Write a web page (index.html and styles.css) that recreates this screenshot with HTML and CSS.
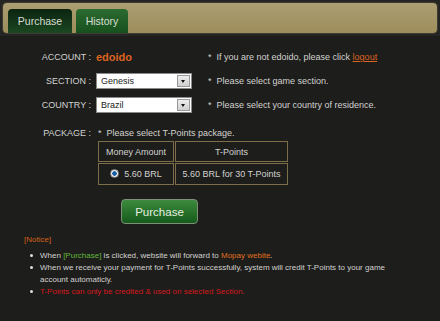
FILE: index.html
```html
<!DOCTYPE html>
<html lang="en">

<head>
  <meta charset="UTF-8">
  <meta name="viewport" content="width=device-width, initial-scale=1.0">
  <title>Purchase T-Points</title>

  <link rel="stylesheet" href="styles.css">
</head>

<body>
  <div class="top">
    <div class="tabbar">
      <a href="#" class="tab active">Purchase</a>
      <a href="#" class="tab history">History</a>
    </div>
  </div>

  <div class="content">
    <div class="row">
      <div class="label">ACCOUNT :</div>
      <div class="value"><span class="account">edoido</span></div>
      <div class="note"><span class="star">*</span>If you are not edoido, please click <a href="#" class="logout">logout</a></div>
    </div>
    <div class="row">
      <div class="label">SECTION :</div>
      <div class="value">
        <div class="select"><span>Genesis</span><span class="arrow"></span></div>
      </div>
      <div class="note"><span class="star">*</span>Please select game section.</div>
    </div>
    <div class="row last">
      <div class="label">COUNTRY :</div>
      <div class="value">
        <div class="select"><span>Brazil</span><span class="arrow"></span></div>
      </div>
      <div class="note"><span class="star">*</span>Please select your country of residence.</div>
    </div>

    <div class="row package">
      <div class="label">PACKAGE :</div>
      <div class="package-box">
        <div class="note"><span class="star">*</span>Please select T-Points package.</div>
        <table class="packages">
          <tr>
            <th class="col-money">Money Amount</th>
            <th>T-Points</th>
          </tr>
          <tr>
            <td><span class="radio checked"></span>5.60 BRL</td>
            <td>5.60 BRL for 30 T-Points</td>
          </tr>
        </table>
      </div>
    </div>

    <div class="actions">
      <button type="button" class="purchase-btn">Purchase</button>
    </div>

    <div class="notice">
      <h3>[Notice]</h3>
      <ul>
        <li>When <span class="green">[Purchase]</span> is clicked, website will forward to <span class="orange">Mopay webite</span>.</li>
        <li>When we receive your payment for T-Points successfully, system will credit T-Points to your game account automaticly.</li>
        <li class="red">T-Points can only be credited &amp; used on selected Section.</li>
      </ul>
    </div>
  </div>
</body>

</html>
```

FILE: styles.css
```css
body {
  margin: 0;
  background-color: #1d1d1b;
  color: #d2d2d0;
  font-family: "Liberation Sans", Arial, sans-serif;
  font-size: 9px;
}

.top {
  padding: 3px;
  background-color: #252523;
}

.tabbar {
  display: flex;
  align-items: flex-end;
  gap: 4px;
  height: 30px;
  padding-left: 5px;
  border-radius: 4px;
  background: linear-gradient(#ab9e71, #9d8d5b);
  box-shadow: 0 0 0 1px #3c3b35;
}

.tab {
  height: 24px;
  line-height: 24px;
  border-radius: 4px 4px 0 0;
  color: #d8ded2;
  font-size: 10.5px;
  text-align: center;
  text-decoration: none;
}

.tab.active {
  width: 64px;
  background: linear-gradient(#0b2410, #1b4721);
}

.tab.history {
  width: 52px;
  background: linear-gradient(#2b6b30, #17501e);
}

.content {
  padding: 13px 0 20px;
}

.row {
  display: flex;
  align-items: center;
  height: 16px;
  margin-bottom: 8px;
}

.row.last {
  margin-bottom: 14px;
}

.label {
  flex-shrink: 0;
  width: 91px;
  text-align: right;
}

.value {
  flex-shrink: 0;
  width: 112px;
  margin-left: 5px;
}

.star {
  margin-right: 5px;
}

.account {
  color: #dc6420;
  font-size: 11px;
  font-weight: bold;
}

.logout {
  color: #dc6420;
}

.select {
  display: flex;
  align-items: center;
  justify-content: space-between;
  box-sizing: border-box;
  width: 96px;
  height: 16px;
  padding: 1px 1px 1px 4px;
  border: 1px solid #8a8a8a;
  background-color: #fff;
  color: #222;
}

.select .arrow {
  position: relative;
  box-sizing: border-box;
  width: 13px;
  height: 12px;
  border: 1px solid #9a9a9a;
  background: linear-gradient(#eee, #cfcfcf);
}

.select .arrow::after {
  content: "";
  position: absolute;
  left: 3px;
  top: 4px;
  border-left: 2.5px solid transparent;
  border-right: 2.5px solid transparent;
  border-top: 3px solid #111;
}

.row.package {
  align-items: flex-start;
  height: auto;
  margin-bottom: 0;
  line-height: 12px;
}

.package-box {
  margin-left: 6px;
}

.package-box .note {
  padding-left: 1px;
}

.packages {
  width: 192px;
  margin-top: 1px;
  border-collapse: separate;
  border-spacing: 1px;
  table-layout: fixed;
}

.packages th,
.packages td {
  border: 1px solid #7b6e49;
  font-weight: normal;
  text-align: center;
  line-height: 12px;
}

.packages th {
  padding: 4px 0 3px;
}

.packages td {
  padding: 4px 0;
}

.packages .col-money {
  width: 74px;
}

.radio {
  display: inline-block;
  box-sizing: border-box;
  width: 9px;
  height: 9px;
  margin-right: 5px;
  border: 1px solid #8c8c8c;
  border-radius: 50%;
  background: radial-gradient(circle, #1d5ea8 0 2px, #f2f2f2 2.5px);
  vertical-align: -1px;
}

.actions {
  margin: 13px 0 0 121px;
}

.purchase-btn {
  display: block;
  width: 77px;
  height: 25px;
  padding: 0;
  border: 1px solid #7d9178;
  border-radius: 4px;
  background: linear-gradient(#3c8b3d, #155a1b);
  color: #e6eee0;
  font-family: "Liberation Sans", Arial, sans-serif;
  font-size: 11.5px;
}

.notice {
  width: 380px;
  margin-top: 10px;
  padding-left: 24px;
  font-size: 8px;
  line-height: 12px;
}

.notice h3 {
  margin: 0;
  color: #d4601a;
  font-size: 8px;
  font-weight: normal;
}

.notice ul {
  margin: 4px 0 0;
  padding: 0;
  list-style: none;
}

.notice li {
  padding-left: 16px;
}

.notice li::before {
  content: "";
  display: inline-block;
  width: 3px;
  height: 3px;
  margin: 0 7px 0 -10px;
  border-radius: 50%;
  background-color: #e0e0e0;
  vertical-align: 1px;
}

.green {
  color: #62b83c;
}

.orange {
  color: #e0701f;
}

.red {
  color: #d3191c;
}
```
